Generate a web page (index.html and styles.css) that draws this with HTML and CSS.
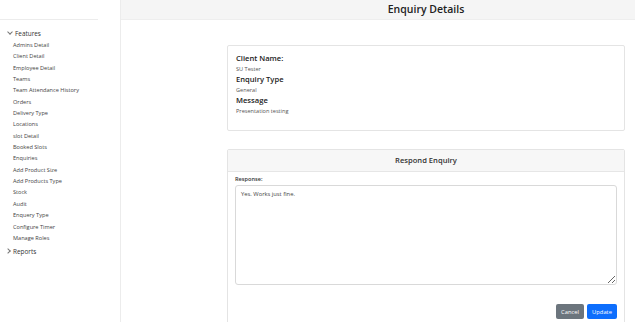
FILE: index.html
```html
<!DOCTYPE html>
<html lang="en">
<head>
    <meta charset="UTF-8">
    <title>Enquiry Details</title>
    <link rel="stylesheet" href="styles.css">
</head>
<body>
<div class="layout">
    <aside class="sidebar">
        <div class="brand"></div>
        <div class="group">
            <div class="group-title"><span class="chev down"></span>Features</div>
            <ul class="menu">
                <li>Admins Detail</li>
                <li>Client Detail</li>
                <li>Employee Detail</li>
                <li>Teams</li>
                <li>Team Attendance History</li>
                <li>Orders</li>
                <li>Delivery Type</li>
                <li>Locations</li>
                <li>slot Detail</li>
                <li>Booked Slots</li>
                <li>Enquiries</li>
                <li>Add Product Size</li>
                <li>Add Products Type</li>
                <li>Stock</li>
                <li>Audit</li>
                <li>Enquery Type</li>
                <li>Configure Timer</li>
                <li>Manage Roles</li>
            </ul>
        </div>
        <div class="group">
            <div class="group-title"><span class="chev right"></span>Reports</div>
        </div>
    </aside>

    <main class="main">
        <header class="topbar">Enquiry Details</header>

        <div class="content">
            <section class="card details">
                <h4>Client Name:</h4>
                <p>SU Tester</p>
                <h4>Enquiry Type</h4>
                <p>General</p>
                <h4>Message</h4>
                <p>Presentation testing</p>
            </section>

            <section class="card respond">
                <div class="card-header">Respond Enquiry</div>
                <div class="card-body">
                    <label for="response">Response:</label>
                    <textarea id="response">Yes. Works just fine.</textarea>
                </div>
                <div class="card-footer">
                    <button class="btn btn-gray">Cancel</button>
                    <button class="btn btn-blue">Update</button>
                </div>
            </section>
        </div>
    </main>
</div>
</body>
</html>
```

FILE: styles.css
```css
* { box-sizing: border-box; }
body { margin: 0; font-family: "Open Sans", "Noto Sans", sans-serif; color: #212529; background: #fff; }

.layout { display: flex; height: 322px; overflow: hidden; }

.sidebar { width: 121px; flex-shrink: 0; border-right: 1px solid #ececec; background: #fff; }
.brand { height: 20px; width: 98px; border-bottom: 1px solid #ececec; }
.group { padding-left: 5px; }
.group-title { font-size: 6.4px; color: #333; display: flex; align-items: center; height: 12px; margin-top: 7px; }
.group + .group .group-title { margin-top: 1px; }
.chev { display: inline-block; width: 4px; height: 4px; border-right: 0.8px solid #777; border-bottom: 0.8px solid #777; margin: 0 3px 0 3px; }
.chev.down { transform: rotate(45deg); margin-top: -2px; }
.chev.right { transform: rotate(-45deg); margin-left: 1px; }
.menu { list-style: none; margin: 0; padding: 1px 0 0 8px; }
.menu li { font-size: 5.6px; color: #444; height: 11.35px; line-height: 11.35px; white-space: nowrap; }

.main { flex: 1; display: flex; flex-direction: column; }
.topbar { height: 21px; background: #f5f5f5; border-bottom: 1px solid #eee; text-align: center; font-size: 10.5px; font-weight: 600; line-height: 19px; color: #222; padding-left: 96px; }

.content { padding: 25px 10px 0 106px; }
.card { border: 1px solid #e4e4e4; border-radius: 2px; background: #fff; }
.details { height: 86px; padding: 7px 8px; }
.details h4 { margin: 0; font-size: 7.6px; font-weight: 600; line-height: 10px; color: #222; }
.details p { margin: 0; font-size: 5.6px; line-height: 12px; color: #555; }
.details p + h4 { margin-top: -1px; }

.respond { margin-top: 18px; height: 200px; }
.card-header { height: 22px; background: #f7f7f7; border-bottom: 1px solid #e6e6e6; text-align: center; font-size: 7.6px; font-weight: 600; line-height: 21px; color: #333; }
.card-body { padding: 3px 7px 0 7px; }
.card-body label { display: block; font-size: 5.6px; font-weight: 600; line-height: 9px; color: #333; margin-bottom: 1px; }
.card-body textarea { display: block; width: 100%; height: 100px; border: 1px solid #d9d9d9; border-radius: 3px; font-family: inherit; font-size: 5.8px; color: #444; padding: 4px 5px; resize: vertical; }
.card-footer { display: flex; justify-content: flex-end; gap: 3px; padding: 19px 7px 0 0; }
.btn { border: none; border-radius: 2px; color: #fff; font-family: inherit; font-size: 5.8px; height: 15px; padding: 0 5px; }
.btn-gray { background: #6c757d; width: 28px; }
.btn-blue { background: #0d6efd; width: 30px; }
```
